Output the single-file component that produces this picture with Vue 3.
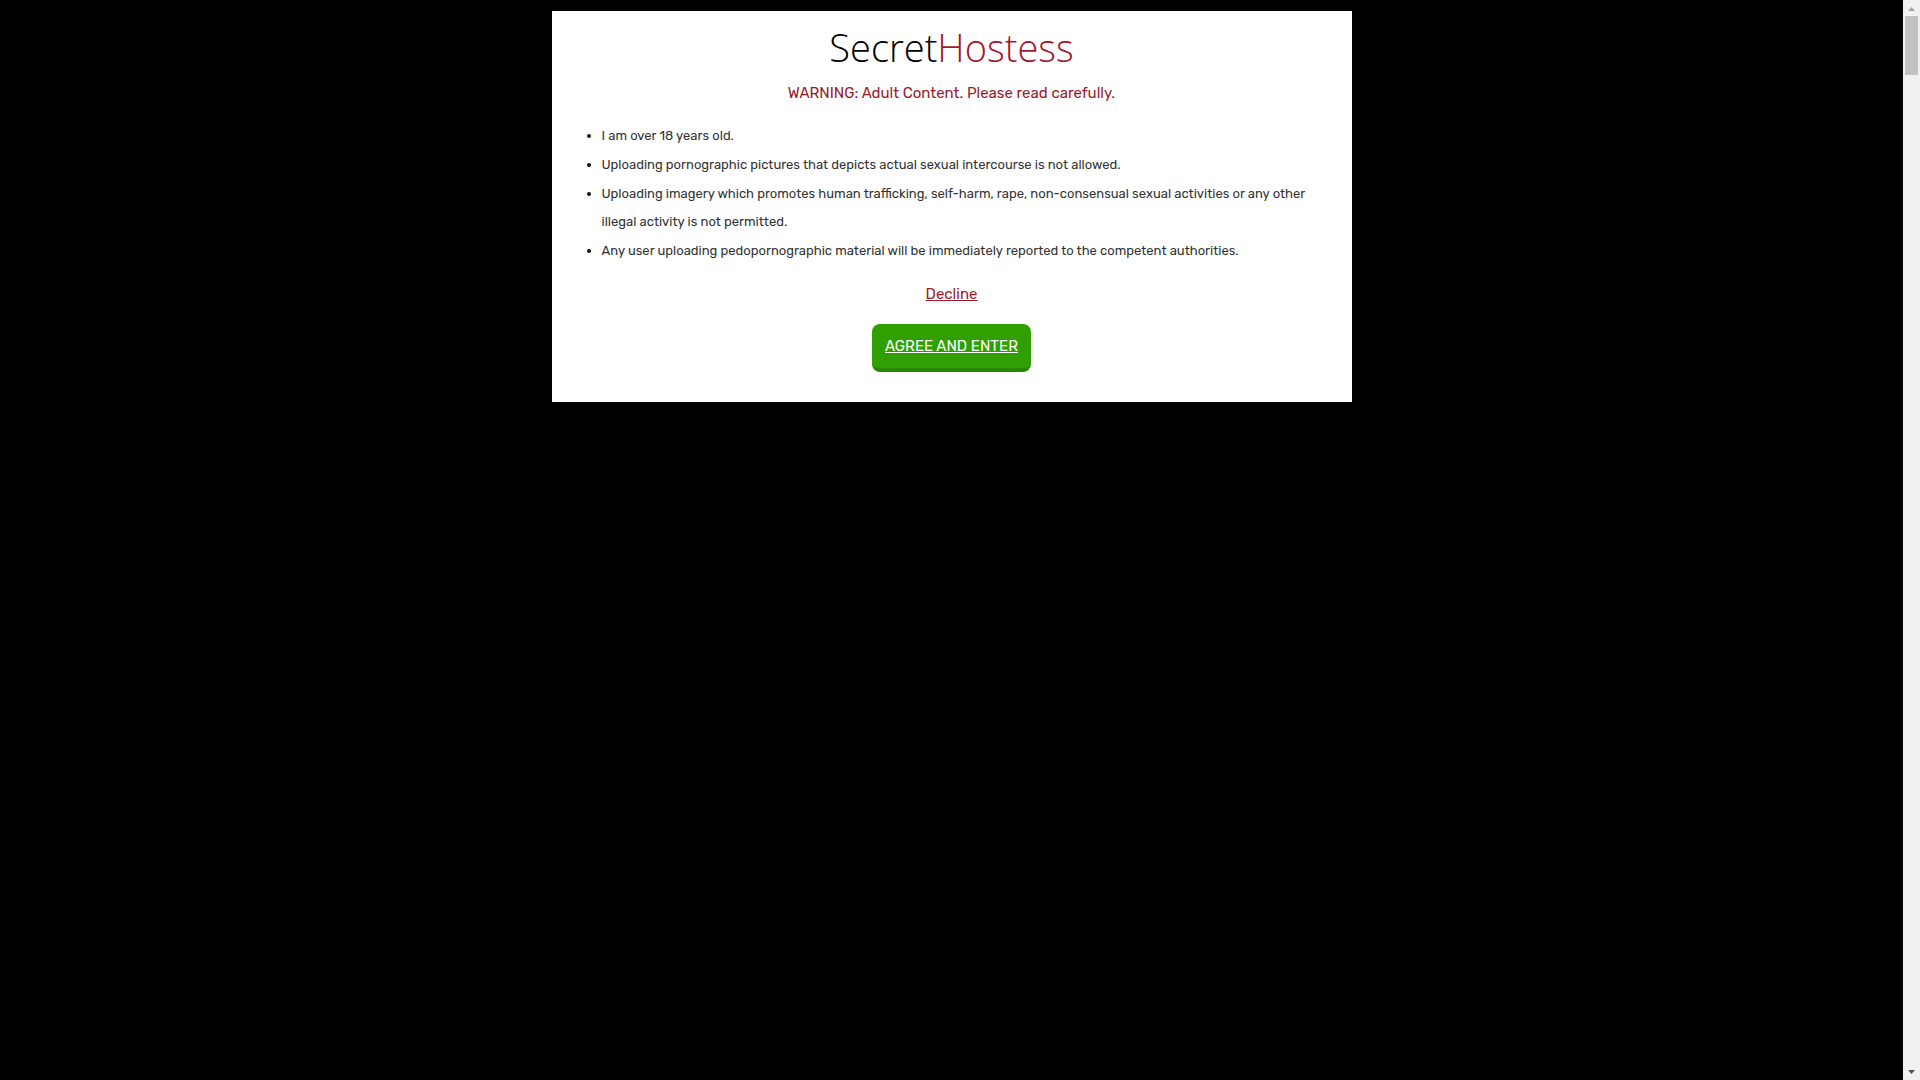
<script setup>
const rules = [
  'I am over 18 years old.',
  'Uploading pornographic pictures that depicts actual sexual intercourse is not allowed.',
  'Uploading imagery which promotes human trafficking, self-harm, rape, non-consensual sexual activities or any other illegal activity is not permitted.',
  'Any user uploading pedopornographic material will be immediately reported to the competent authorities.',
]
</script>

<template>
  <div class="screen">
    <main class="overlay">
      <section class="card">
        <h1 class="logo">Secret<span class="accent">Hostess</span></h1>
        <p class="warning">WARNING: Adult Content. Please read carefully.</p>
        <ul class="rules">
          <li v-for="rule in rules" :key="rule">{{ rule }}</li>
        </ul>
        <a class="decline" href="#decline">Decline</a>
        <a class="agree" href="#enter">AGREE AND ENTER</a>
      </section>
    </main>
    <div class="scrollbar" aria-hidden="true">
      <svg class="arrow" viewBox="0 0 17 16"><path d="M5 11 L8.5 7 L12 11 Z" fill="#a3a3a3" /></svg>
      <div class="thumb"></div>
      <svg class="arrow" viewBox="0 0 17 16"><path d="M5 6 L8.5 10 L12 6 Z" fill="#505050" /></svg>
    </div>
  </div>
</template>

<style>
body {
  background: #000;
}
</style>

<style scoped>
.screen {
  display: flex;
  min-height: 100vh;
  background: #000;
  color: #333;
  font-family: Rubik, Roboto, sans-serif;
}

.overlay {
  flex: 1;
  padding: 11px 0;
}

.card {
  display: flex;
  flex-direction: column;
  align-items: center;
  box-sizing: border-box;
  max-width: 800px;
  margin: 0 auto;
  padding: 12px 24px 30px;
  background: #fff;
}

.logo {
  margin: 0;
  color: #000;
  font-family: "Open Sans", sans-serif;
  font-size: 38px;
  font-weight: 300;
  line-height: 48px;
}

.accent {
  color: #a3182b;
}

.warning {
  margin: 10px 0 17px;
  color: #971b2b;
  font-size: 15px;
  line-height: 24px;
}

.rules {
  display: flex;
  flex-direction: column;
  gap: 1px;
  align-self: stretch;
  margin: 0 0 17px;
  padding: 0 0 0 26px;
  font-size: 13px;
  line-height: 28px;
}

.rules li::marker {
  color: #111;
}

.decline {
  color: #971b2b;
  font-size: 15px;
  line-height: 24px;
}

.agree {
  margin: 18px 0 0;
  padding: 10px 13px;
  border-bottom: 4px solid #2a8602;
  border-radius: 8px;
  background: #319f02;
  color: #fff;
  font-size: 15px;
  font-weight: 400;
  line-height: 24px;
}

.scrollbar {
  display: flex;
  flex-direction: column;
  width: 17px;
  background: #f1f1f1;
}

.arrow {
  width: 17px;
  height: 16px;
}

.thumb {
  height: 59px;
  margin: 0 2px auto;
  background: #c1c1c1;
}
</style>
